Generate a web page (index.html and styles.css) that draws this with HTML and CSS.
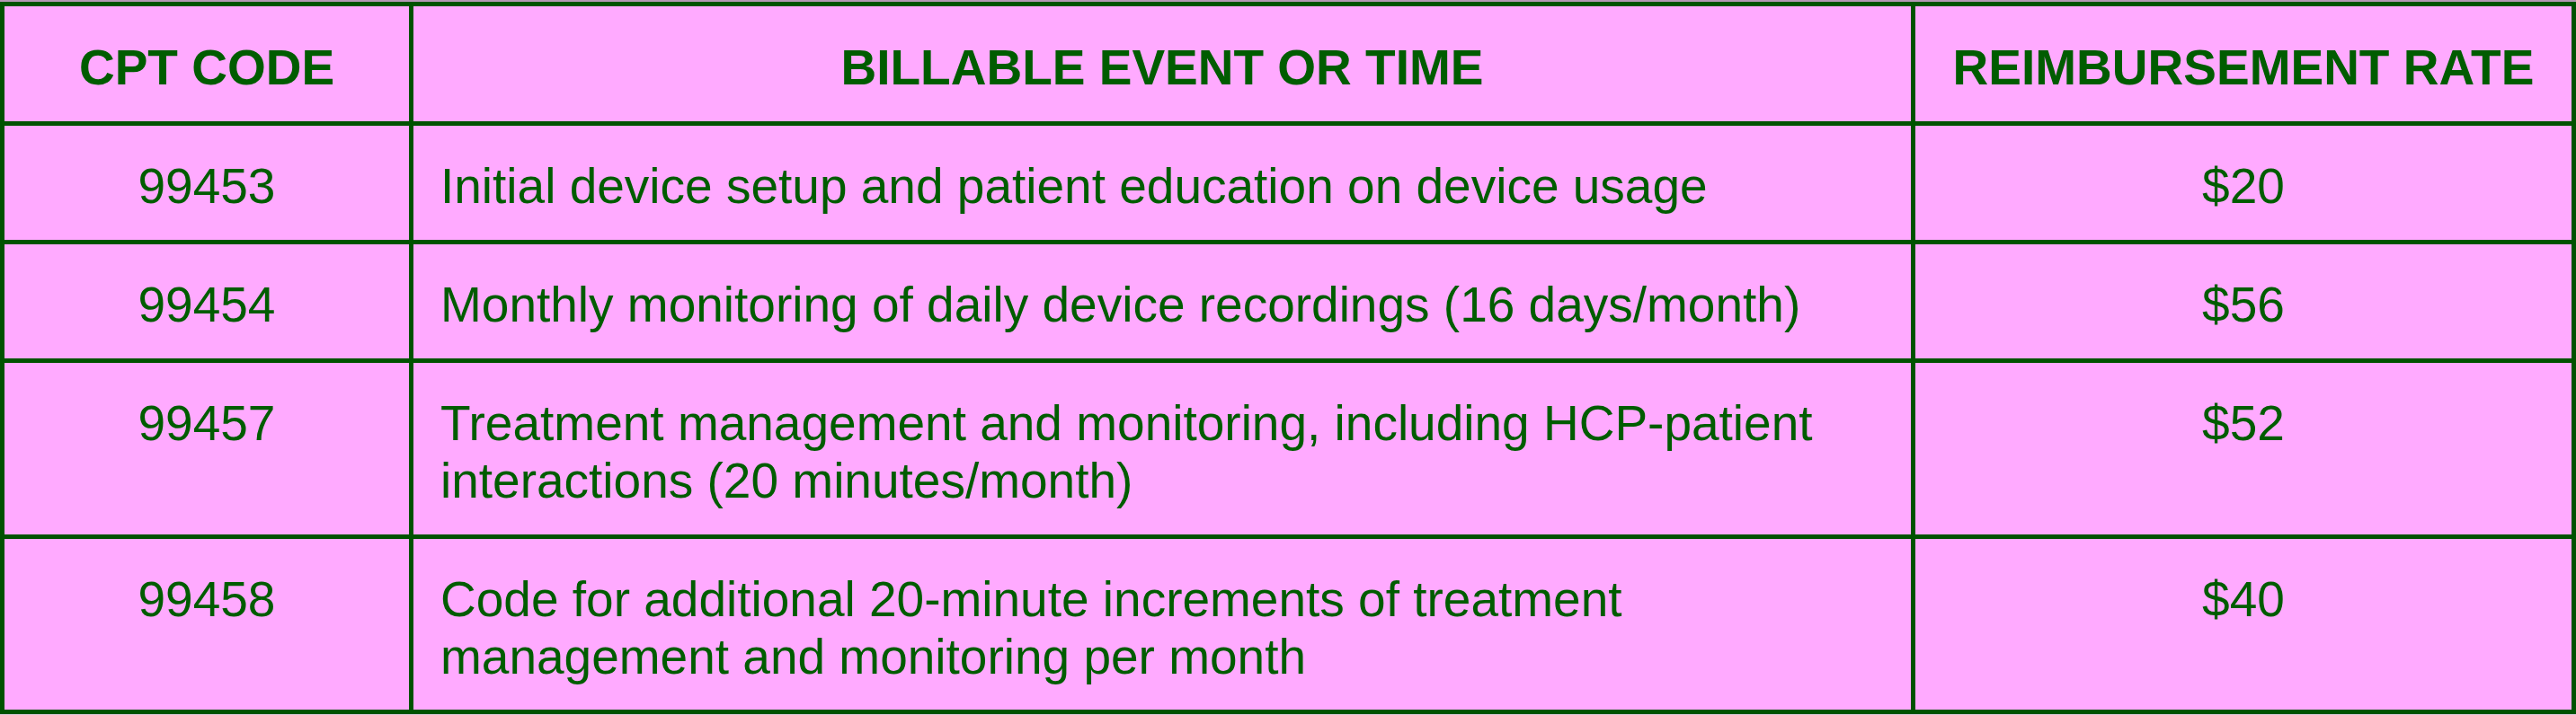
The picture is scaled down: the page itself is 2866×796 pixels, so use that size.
FILE: index.html
```html
<!DOCTYPE html>
<html lang="en">
<head>
<meta charset="utf-8">
<title>RPM CPT Codes</title>
<link rel="stylesheet" href="styles.css">
</head>
<body>
<table class="rates">
  <thead>
    <tr>
      <th class="col-code">CPT CODE</th>
      <th class="col-event">BILLABLE EVENT OR TIME</th>
      <th class="col-rate">REIMBURSEMENT RATE</th>
    </tr>
  </thead>
  <tbody>
    <tr>
      <td class="code">99453</td>
      <td class="event">Initial device setup and patient education on device usage</td>
      <td class="rate">$20</td>
    </tr>
    <tr>
      <td class="code">99454</td>
      <td class="event">Monthly monitoring of daily device recordings (16 days/month)</td>
      <td class="rate">$56</td>
    </tr>
    <tr>
      <td class="code">99457</td>
      <td class="event">Treatment management and monitoring, including HCP-patient interactions (20 minutes/month)</td>
      <td class="rate">$52</td>
    </tr>
    <tr class="last">
      <td class="code">99458</td>
      <td class="event">Code for additional 20-minute increments of treatment management and monitoring per month</td>
      <td class="rate">$40</td>
    </tr>
  </tbody>
</table>
</body>
</html>
```
FILE: styles.css
```css
html {
  background: #d9c9d9;
}
body {
  margin: 0;
  padding-top: 2px;
  background: #b598b5;
  font-family: "Liberation Sans", Arial, sans-serif;
}
.rates {
  width: 2866px;
  border-collapse: collapse;
  table-layout: fixed;
  background: #ffaaff;
  color: #005c00;
  font-size: 55px;
  line-height: 64px;
}
.rates th,
.rates td {
  border: 5px solid #005200;
  padding: 35px 30px 28px;
  vertical-align: top;
}
.rates th {
  font-weight: bold;
  text-align: center;
  padding-top: 36px;
}
.col-code { width: 390px; }
.col-event { width: 1606px; }
.code,
.rate {
  text-align: center;
}
.event {
  text-align: left;
}
.rates tr.last td {
  padding-bottom: 27px;
}
```
